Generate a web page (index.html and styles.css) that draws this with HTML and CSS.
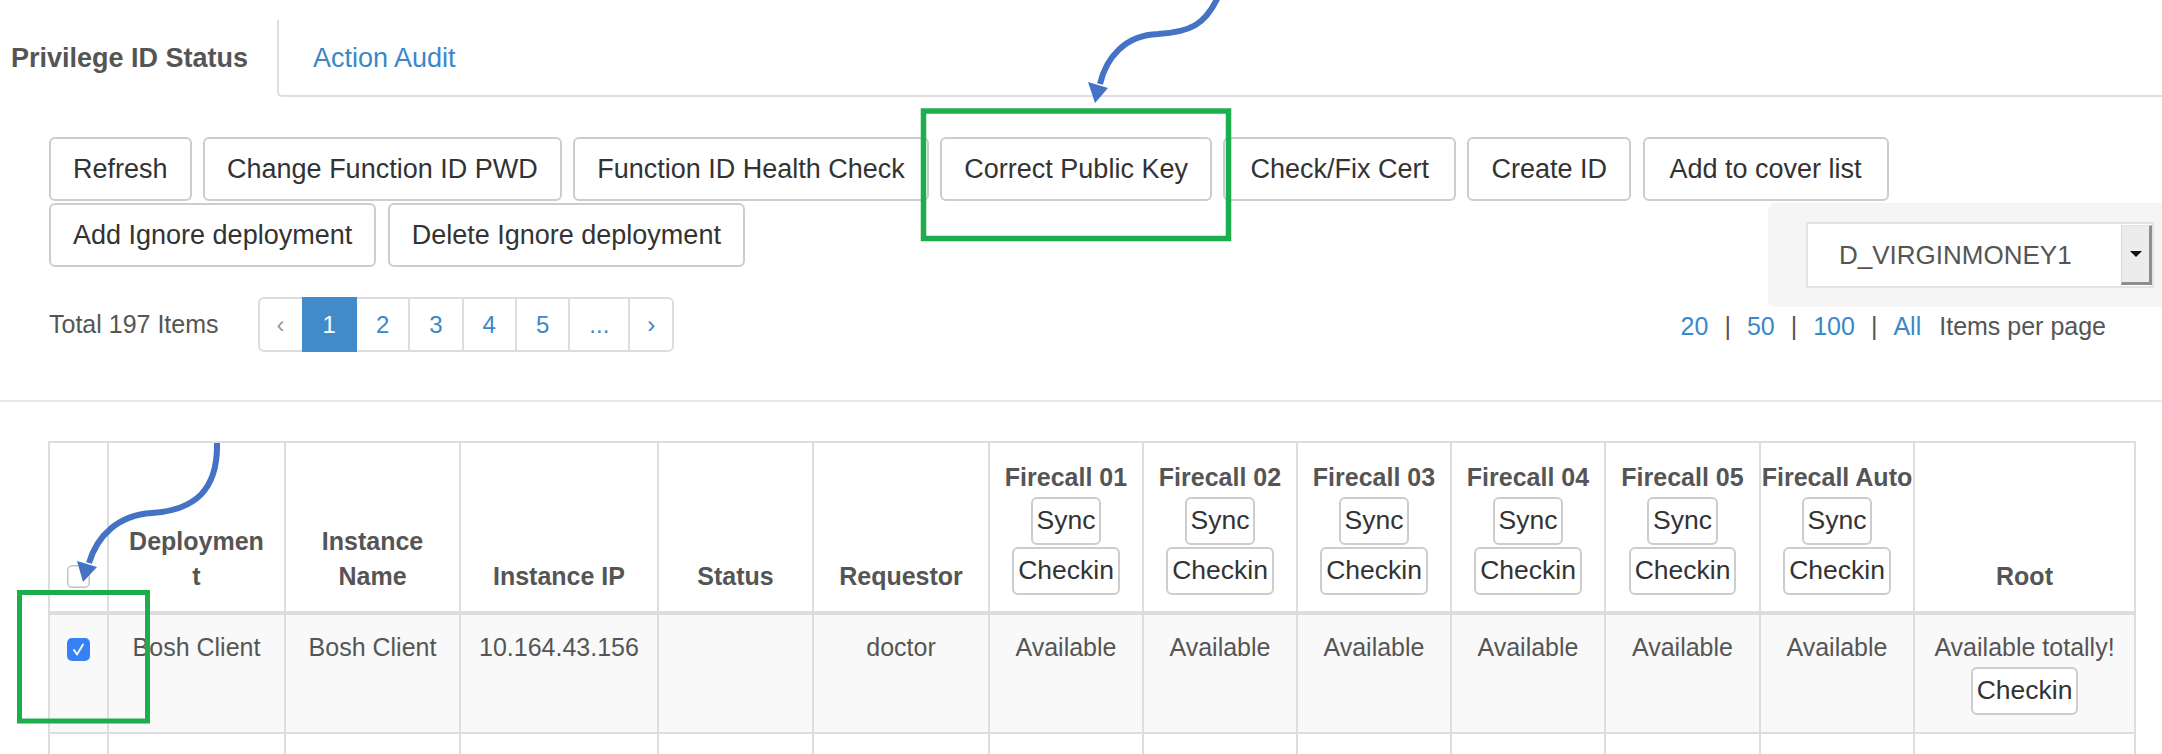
FILE: index.html
```html
<!DOCTYPE html>
<html lang="en">
<head>
<meta charset="utf-8">
<title>Privilege ID Status</title>
<link rel="stylesheet" href="styles.css">
</head>
<body>
<nav class="tabs">
  <div class="tab-active">Privilege ID Status</div>
  <div class="tab-rest"><a class="tab-link" href="#">Action Audit</a></div>
</nav>

<div class="toolbar toolbar-top">
  <button class="btn">Refresh</button>
  <button class="btn">Change Function ID PWD</button>
  <button class="btn">Function ID Health Check</button>
  <button class="btn">Correct Public Key</button>
  <button class="btn btn-wide">Check/Fix Cert</button>
  <button class="btn">Create ID</button>
  <button class="btn btn-wide">Add to cover list</button>
</div>

<div class="controls">
  <div class="controls-left">
    <div class="toolbar">
      <button class="btn">Add Ignore deployment</button>
      <button class="btn">Delete Ignore deployment</button>
    </div>
    <div class="pager-row">
      <span class="total">Total 197 Items</span>
      <ul class="pagination">
        <li class="disabled edge">&lsaquo;</li>
        <li class="active">1</li>
        <li>2</li>
        <li>3</li>
        <li>4</li>
        <li>5</li>
        <li>...</li>
        <li class="edge">&rsaquo;</li>
      </ul>
    </div>
  </div>
  <div class="controls-right">
    <div class="well">
      <div class="select">
        <span class="select-value">D_VIRGINMONEY1</span>
        <span class="select-arrow"><span class="caret"></span></span>
      </div>
    </div>
    <div class="per-page">
      <a href="#">20</a><span class="sep">|</span><a href="#">50</a><span class="sep">|</span><a href="#">100</a><span class="sep">|</span><a href="#">All</a><span class="pp-label">Items per page</span>
    </div>
  </div>
</div>

<hr class="divider">

<table class="grid">
  <colgroup>
    <col style="width:59px"><col style="width:177px"><col style="width:175px"><col style="width:198px"><col style="width:155px"><col style="width:176px"><col style="width:154px"><col style="width:154px"><col style="width:154px"><col style="width:154px"><col style="width:155px"><col style="width:154px"><col style="width:221px">
  </colgroup>
  <thead>
    <tr>
      <th class="th-check"><span class="cb cb-empty"><svg width="23" height="23" viewBox="0 0 23 23"><rect x="0.75" y="0.75" width="21.5" height="21.5" rx="4.5" fill="#fff" stroke="#c4c4c4" stroke-width="1.5"/></svg></span></th>
      <th class="th-dep">Deployment</th>
      <th>Instance Name</th>
      <th>Instance IP</th>
      <th>Status</th>
      <th>Requestor</th>
      <th class="fc"><div class="fc-head"><span class="fc-label">Firecall 01</span><button class="mini sync">Sync</button><button class="mini checkin">Checkin</button></div></th>
      <th class="fc"><div class="fc-head"><span class="fc-label">Firecall 02</span><button class="mini sync">Sync</button><button class="mini checkin">Checkin</button></div></th>
      <th class="fc"><div class="fc-head"><span class="fc-label">Firecall 03</span><button class="mini sync">Sync</button><button class="mini checkin">Checkin</button></div></th>
      <th class="fc"><div class="fc-head"><span class="fc-label">Firecall 04</span><button class="mini sync">Sync</button><button class="mini checkin">Checkin</button></div></th>
      <th class="fc"><div class="fc-head"><span class="fc-label">Firecall 05</span><button class="mini sync">Sync</button><button class="mini checkin">Checkin</button></div></th>
      <th class="fc"><div class="fc-head"><span class="fc-label">Firecall Auto</span><button class="mini sync">Sync</button><button class="mini checkin">Checkin</button></div></th>
      <th>Root</th>
    </tr>
  </thead>
  <tbody>
    <tr class="striped">
      <td class="td-check"><span class="cb cb-on"><svg width="23" height="23" viewBox="0 0 23 23"><rect width="23" height="23" rx="5" fill="#3781f6"/><path d="M7 12 L10 16.5 L16 6.5" stroke="#fff" stroke-width="1.8" fill="none" stroke-linecap="round" stroke-linejoin="round"/></svg></span></td>
      <td>Bosh Client</td>
      <td>Bosh Client</td>
      <td>10.164.43.156</td>
      <td></td>
      <td>doctor</td>
      <td>Available</td>
      <td>Available</td>
      <td>Available</td>
      <td>Available</td>
      <td>Available</td>
      <td>Available</td>
      <td class="root"><div class="root-cell"><span>Available totally!</span><button class="mini root-btn">Checkin</button></div></td>
    </tr>
    <tr class="blank">
      <td></td><td></td><td></td><td></td><td></td><td></td><td></td><td></td><td></td><td></td><td></td><td></td><td></td>
    </tr>
  </tbody>
</table>

<svg class="annot" width="2162" height="754" viewBox="0 0 2162 754" aria-hidden="true">
  <rect x="923.5" y="111" width="305" height="127.5" fill="none" stroke="#1cae4d" stroke-width="5.5"/>
  <rect x="19.5" y="592.5" width="128" height="128.5" fill="none" stroke="#1cae4d" stroke-width="5"/>
  <path d="M1218,-3 C1205,25 1190,32 1158,34 C1125,35 1106,58 1100,84" stroke="#4472c4" stroke-width="6" fill="none"/>
  <polygon points="1088,82 1108,88 1095,103" fill="#4472c4"/>
  <path d="M217,443 C218,490 195,510 152,513 C118,515 97,536 89,563" stroke="#4472c4" stroke-width="6" fill="none"/>
  <polygon points="77,561 97,567 83,582" fill="#4472c4"/>
</svg>
</body>
</html>
```

FILE: styles.css
```css
* { box-sizing: border-box; }

html, body {
  margin: 0;
  padding: 0;
  overflow: hidden;
  background: #fff;
}

body {
  position: relative;
  width: 2162px;
  height: 754px;
  font-family: "Liberation Sans", Arial, sans-serif;
  color: #555;
}

a { text-decoration: none; }

/* Tabs */
.tabs {
  display: flex;
  height: 97px;
}

.tab-active {
  width: 277px;
  padding: 39px 0 0 11px;
  font-size: 27px;
  line-height: 38px;
  font-weight: bold;
  color: #555;
}

.tab-rest {
  flex: 1;
  margin-top: 20px;
  border-left: 2px solid #dedede;
  border-bottom: 2px solid #dedede;
  border-bottom-left-radius: 5px;
  padding: 19px 0 0 34px;
}

.tab-link {
  font-size: 27px;
  line-height: 38px;
  color: #3b87c8;
}

/* Buttons */
.toolbar {
  display: flex;
  gap: 11.5px;
}

.toolbar-top {
  margin-top: 40px;
  padding-left: 49px;
}

.btn {
  height: 64px;
  padding: 0 22px;
  font-family: "Liberation Sans", Arial, sans-serif;
  font-size: 27px;
  font-weight: normal;
  color: #333;
  background: #fff;
  border: 2px solid #cdcdcd;
  border-radius: 6px;
  white-space: nowrap;
}

.btn-wide {
  padding: 0 25px;
}

/* Controls (row 2 + pager + select) */
.controls {
  display: grid;
  grid-template-columns: 1fr auto;
  margin-top: 2px;
}

.controls-left {
  padding-left: 49px;
}

.pager-row {
  display: flex;
  align-items: center;
  gap: 39px;
  margin-top: 30px;
}

.total {
  font-size: 25px;
  color: #555;
}

.pagination {
  display: flex;
  list-style: none;
  margin: 0;
  padding: 0;
  height: 55px;
}

.pagination li {
  display: flex;
  align-items: center;
  padding: 0 19px;
  margin-left: -2px;
  border: 2px solid #dddddd;
  background: #fff;
  font-size: 24px;
  color: #3b87c8;
}

.pagination li.edge {
  padding: 0 17px;
}

.pagination li:first-child {
  margin-left: 0;
  border-radius: 6px 0 0 6px;
}

.pagination li:last-child {
  border-radius: 0 6px 6px 0;
}

.pagination li.disabled {
  color: #999;
}

.pagination li.active {
  position: relative;
  z-index: 1;
  background: #428bca;
  border-color: #428bca;
  color: #fff;
}

.controls-right {
  display: flex;
  flex-direction: column;
  align-items: flex-end;
}

.well {
  background: #f5f5f5;
  border-radius: 7px 0 0 7px;
  padding: 19px 8px 19px 38px;
}

.select {
  display: flex;
  width: 348px;
  height: 66px;
  border: 2px solid #e3e3e3;
  background: #fff;
}

.select-value {
  flex: 1;
  display: flex;
  align-items: center;
  padding-left: 31px;
  font-size: 26px;
  color: #555;
}

.select-arrow {
  width: 31px;
  margin: 1px 0;
  display: flex;
  align-items: center;
  justify-content: center;
  background: #ececec;
  border-top: 1px solid #e2e2e2;
  border-left: 1px solid #d6d6d6;
  border-right: 3px solid #8e8e8e;
  border-bottom: 3px solid #8e8e8e;
}

.caret {
  width: 0;
  height: 0;
  border-left: 6px solid transparent;
  border-right: 6px solid transparent;
  border-top: 6px solid #111;
}

.per-page {
  display: flex;
  align-items: baseline;
  gap: 16px;
  margin-top: 2px;
  padding-right: 56px;
  font-size: 25px;
  line-height: 35px;
}

.per-page a {
  color: #3b87c8;
}

.sep {
  color: #555;
}

.pp-label {
  margin-left: 2px;
  color: #555;
}

/* Divider */
.divider {
  border: 0;
  border-top: 2px solid #e6e9ec;
  margin: 48px 0 0;
  height: 0;
}

/* Table */
.grid {
  margin: 39px 0 0 48px;
  width: 2086px;
  table-layout: fixed;
  border-collapse: collapse;
  font-size: 25px;
  line-height: 35.5px;
}

.grid th,
.grid td {
  border: 2px solid #dddddd;
  text-align: center;
  color: #555;
}

.grid th {
  padding: 17px 15px 16px;
  vertical-align: bottom;
  font-weight: bold;
  border-bottom: 4px solid #dddddd;
}

.grid th.th-dep {
  padding-left: 18px;
  padding-right: 18px;
  word-break: break-all;
}

.grid th.th-check,
.grid td.td-check {
  padding-left: 0;
  padding-right: 0;
}

.grid th.fc {
  padding-left: 0;
  padding-right: 0;
}

.fc-head {
  display: flex;
  flex-direction: column;
  align-items: center;
}

.fc-label {
  white-space: nowrap;
}

.mini {
  height: 48px;
  padding: 0 4px;
  font-family: "Liberation Sans", Arial, sans-serif;
  font-size: 26.5px;
  font-weight: normal;
  color: #333;
  background: #fff;
  border: 2px solid #cdcdcd;
  border-radius: 6px;
  white-space: nowrap;
}

.mini.sync { margin-top: 1px; }
.mini.checkin { margin-top: 2px; }

.grid td {
  padding: 15px 15px 17px;
  vertical-align: top;
}

.striped td {
  background: #f9f9f9;
}

.blank td {
  height: 120px;
}

.cb {
  display: inline-block;
  width: 23px;
  height: 23px;
  line-height: 0;
}

.cb-empty {
  vertical-align: -3px;
}

.cb-on {
  vertical-align: -5px;
}

.root-cell {
  display: flex;
  flex-direction: column;
  align-items: center;
}

.root-btn {
  margin-top: 1.5px;
}

/* Annotation overlay */
.annot {
  position: absolute;
  left: 0;
  top: 0;
  pointer-events: none;
}
```
